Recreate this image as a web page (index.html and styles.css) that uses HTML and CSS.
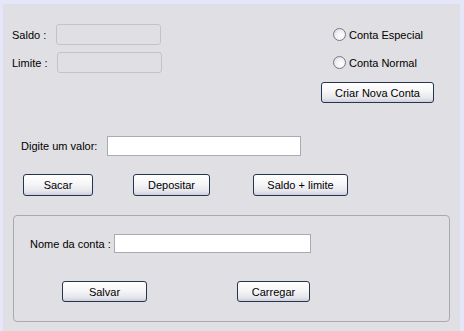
FILE: index.html
```html
<!DOCTYPE HTML>
<html>
<head>
<link rel="stylesheet" href="styles.css">
</head>
<body>
<div class="window">

<div class="top">
  <div class="account">
    <label>Saldo :</label><input type="text" class="field-off" disabled>
    <label>Limite :</label><input type="text" class="field-off second" disabled>
  </div>
  <div class="kind">
    <div class="radio first"><span class="dot"></span>Conta Especial</div>
    <div class="radio"><span class="dot"></span>Conta Normal</div>
    <button type="button" class="btn btn-create">Criar Nova Conta</button>
  </div>
</div>

<div class="value-row">
  <label>Digite um valor:</label><input type="text" class="field field-value">
</div>

<div class="actions">
  <button type="button" class="btn btn-sacar">Sacar</button>
  <button type="button" class="btn btn-depositar">Depositar</button>
  <button type="button" class="btn btn-saldo">Saldo + limite</button>
</div>

<div class="group">
  <div class="name-row">
    <label>Nome da conta :</label><input type="text" class="field field-name">
  </div>
  <div class="group-actions">
    <button type="button" class="btn btn-salvar">Salvar</button>
    <button type="button" class="btn btn-carregar">Carregar</button>
  </div>
</div>

</div>
</body>
</html>
```

FILE: styles.css
```css
* {
font-family: "Liberation Sans", Arial, sans-serif;
font-size: 11px;
box-sizing: border-box;
}
body {
margin: 0;
background-color: #e8e8f8;
}
.window {
width: 464px;
height: 331px;
background-color: #e0dfe3;
border-top: 4px solid #e6e6fa;
border-left: 3px solid #e6e6fa;
border-right: 4px solid #e6e6fa;
color: #000;
}
label {
color: #000;
}

.top {
display: flex;
padding-top: 20px;
}
.account {
display: grid;
grid-template-columns: 44px 105px;
row-gap: 7px;
align-items: center;
margin-left: 9px;
align-self: flex-start;
}
.field-off {
width: 105px;
height: 21px;
border: 1px solid #c3c3c8;
border-radius: 3px;
background: #e0dfe3;
}
.field-off.second {
margin-left: 1px;
}
.kind {
margin-left: auto;
margin-right: 26px;
width: 113px;
display: flex;
flex-direction: column;
}
.radio {
display: flex;
align-items: center;
height: 13px;
margin-left: 12px;
margin-top: 15px;
}
.radio.first {
margin-top: 4px;
}
.dot {
width: 13px;
height: 13px;
border: 1px solid #6f7a8a;
border-radius: 50%;
background: radial-gradient(circle at 65% 65%, #ffffff 0%, #f2f2f4 45%, #d4d4dc 100%);
margin-right: 3px;
}

.btn {
height: 22px;
padding: 0;
border: 1px solid #27344f;
border-radius: 3px;
background: linear-gradient(to bottom, #ffffff 0%, #f6f6f8 45%, #e6e6ec 80%, #cfcfdc 100%);
color: #000;
}
.btn-create {
margin-top: 13px;
height: 21px;
width: 113px;
}

.field {
border: 1px solid #a5acb2;
background: #fff;
}
.value-row {
display: flex;
align-items: center;
margin-top: 33px;
padding-left: 18px;
}
.value-row label {
width: 86px;
}
.field-value {
width: 194px;
height: 20px;
}

.actions {
display: flex;
margin-top: 18px;
padding-left: 20px;
}
.btn-sacar {
width: 70px;
}
.btn-depositar {
width: 77px;
margin-left: 40px;
}
.btn-saldo {
width: 95px;
margin-left: 43px;
}

.group {
margin: 19px 0 0 10px;
width: 437px;
height: 107px;
border: 1px solid #a9a9b0;
border-radius: 4px;
}
.name-row {
display: flex;
align-items: center;
padding: 18px 0 0 16px;
}
.name-row label {
width: 84px;
}
.field-name {
width: 197px;
height: 19px;
}
.group-actions {
display: flex;
margin-top: 28px;
padding-left: 48px;
}
.btn-salvar {
width: 85px;
height: 21px;
}
.btn-carregar {
width: 73px;
height: 21px;
margin-left: 90px;
}
```
